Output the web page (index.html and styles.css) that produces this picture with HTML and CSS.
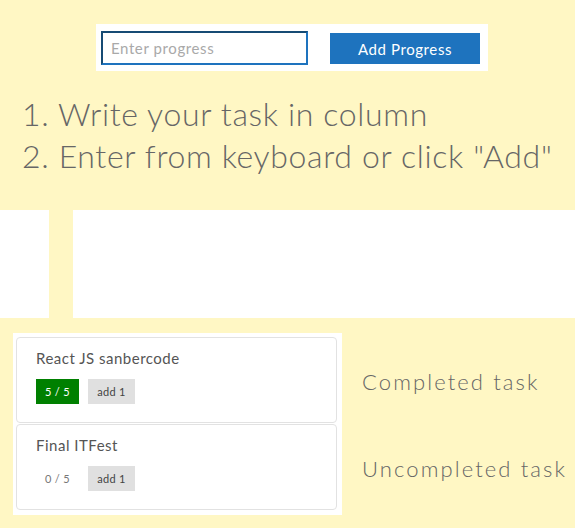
FILE: index.html
```html
<!DOCTYPE html>
<html>
<head>
<meta charset="utf-8">
<link rel="stylesheet" href="styles.css">
</head>
<body>
<div class="top">
  <form class="add-form">
    <input class="progress-input" type="text" placeholder="Enter progress">
    <button class="add-btn" type="button">Add Progress</button>
  </form>
</div>
<div class="steps">
  <p class="step">1. Write your task in column</p>
  <p class="step">2. Enter from keyboard or click "Add"</p>
</div>
<div class="band">
  <div class="band-left"></div>
  <div class="band-right"></div>
</div>
<div class="tasks">
  <div class="cards">
    <div class="card">
      <div class="card-title">React JS sanbercode</div>
      <div class="card-actions">
        <span class="count done">5 / 5</span>
        <span class="add-one">add 1</span>
      </div>
    </div>
    <div class="card">
      <div class="card-title">Final ITFest</div>
      <div class="card-actions">
        <span class="count">0 / 5</span>
        <span class="add-one">add 1</span>
      </div>
    </div>
  </div>
  <div class="labels">
    <div class="label">Completed task</div>
    <div class="label">Uncompleted task</div>
  </div>
</div>
</body>
</html>
```
FILE: styles.css
```css
html, body {
  margin: 0;
  padding: 0;
}
body {
  background: #fff7c4;
  font-family: Lato, "Open Sans", sans-serif;
  color: #666;
  width: 575px;
  height: 528px;
  overflow: hidden;
}
.top {
  display: flex;
  justify-content: center;
  padding: 24px 0 0 9px;
}
.add-form {
  display: flex;
  align-items: flex-start;
  background: #fff;
  padding: 7px 8px 6px 5px;
  gap: 22px;
  margin: 0;
}
.progress-input {
  box-sizing: border-box;
  width: 207px;
  height: 34px;
  border-style: solid;
  border-width: 2px;
  border-color: #164b74 #1e73be #1e73be #164b74;
  padding: 0 8px;
  font-family: inherit;
  font-size: 15px;
  letter-spacing: 0.6px;
  color: #333;
  outline: none;
}
.progress-input::placeholder {
  color: #a9a9a9;
}
.add-btn {
  box-sizing: border-box;
  width: 150px;
  height: 31px;
  margin-top: 2px;
  background: #1e73be;
  border: none;
  color: #fff;
  font-family: inherit;
  font-size: 15px;
  letter-spacing: 0.6px;
  padding: 0;
}
.steps {
  padding: 22px 0 0 22px;
}
.step {
  margin: 0;
  font-size: 32px;
  line-height: 42px;
  font-weight: 300;
  letter-spacing: 0.65px;
  color: #666;
  white-space: nowrap;
}
.band {
  display: flex;
  gap: 24px;
  margin-top: 33px;
  height: 108px;
}
.band-left {
  width: 49px;
  background: #fff;
}
.band-right {
  flex: 1;
  background: #fff;
}
.tasks {
  display: flex;
  align-items: flex-start;
  margin-top: 15px;
  padding-left: 13px;
}
.cards {
  background: #fff;
  padding: 4px 5px 5px 3px;
  display: flex;
  flex-direction: column;
  gap: 1px;
}
.card {
  box-sizing: border-box;
  width: 321px;
  height: 86px;
  border: 1px solid #e2e2e2;
  border-radius: 4px;
  padding: 10px 19px 0;
}
.card-title {
  font-size: 15px;
  line-height: 20px;
  letter-spacing: 0.5px;
  color: #555;
}
.card-actions {
  display: flex;
  gap: 9px;
  margin-top: 11px;
}
.count, .add-one {
  display: flex;
  align-items: center;
  justify-content: center;
  height: 25px;
  font-size: 11px;
  letter-spacing: 0.3px;
}
.count {
  width: 43px;
  color: #777;
}
.count.done {
  background: #008000;
  color: #fff;
}
.add-one {
  width: 47px;
  background: #e0e0e0;
  color: #444;
}
.labels {
  padding: 4px 0 0 20px;
  display: flex;
  flex-direction: column;
  gap: 1px;
}
.label {
  height: 86px;
  display: flex;
  align-items: center;
  font-size: 22px;
  font-weight: 300;
  letter-spacing: 2.1px;
  color: #666;
  padding-top: 3px;
  box-sizing: border-box;
  white-space: nowrap;
}
```
